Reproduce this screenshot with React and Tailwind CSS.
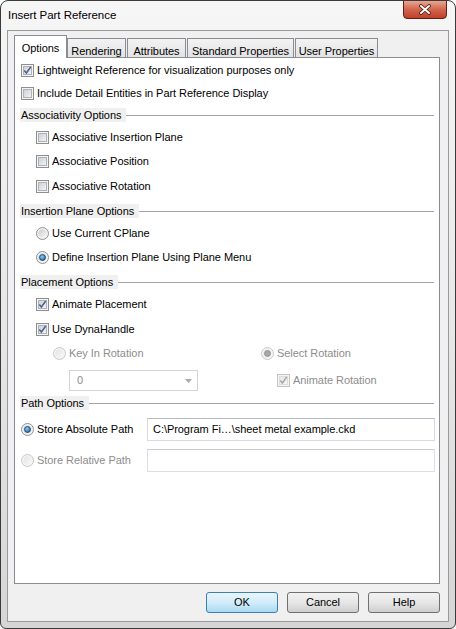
import React from 'react'

const Check = ({ checked, disabled }) => {
  const border = disabled ? '#c4c4c4' : '#8e8f8f'
  const tick = disabled ? '#a8a8a8' : '#4c5f8e'
  return (
    <svg width="13" height="13" viewBox="0 0 13 13" className="shrink-0">
      <defs>
        <linearGradient id={disabled ? 'cbd' : 'cbe'} x1="0" y1="0" x2="1" y2="1">
          <stop offset="0" stopColor={disabled ? '#e6e6e6' : '#cbcfd5'} />
          <stop offset="1" stopColor={disabled ? '#f7f7f7' : '#f4f5f6'} />
        </linearGradient>
      </defs>
      <rect x="0.5" y="0.5" width="12" height="12" fill="#f4f4f4" stroke={border} />
      <rect x="2.5" y="2.5" width="8" height="8" fill={`url(#${disabled ? 'cbd' : 'cbe'})`} stroke={disabled ? '#dcdcdc' : '#aeb3b9'} />
      {checked && (
        <path d="M3.3 6.5 L5.4 9 L9.7 3" fill="none" stroke={tick} strokeWidth="1.5" />
      )}
    </svg>
  )
}

const Radio = ({ checked, disabled }) => {
  const id = disabled ? 'rdd' : 'rde'
  return (
    <svg width="13" height="13" viewBox="0 0 13 13" className="shrink-0">
      <defs>
        <linearGradient id={id} x1="0" y1="0" x2="1" y2="1">
          <stop offset="0" stopColor={disabled ? '#e4e4e4' : '#c9ccd1'} />
          <stop offset="1" stopColor={disabled ? '#f8f8f8' : '#f5f5f5'} />
        </linearGradient>
        <radialGradient id="rdot" cx="0.4" cy="0.35" r="0.7">
          <stop offset="0" stopColor="#8fd0f5" />
          <stop offset="1" stopColor="#1a5c9b" />
        </radialGradient>
      </defs>
      <circle cx="6.5" cy="6.5" r="6" fill="#f4f4f4" stroke={disabled ? '#c8c8c8' : '#8e8f8f'} />
      <circle cx="6.5" cy="6.5" r="4.2" fill={`url(#${id})`} />
      {checked && !disabled && <circle cx="6.5" cy="6.5" r="3" fill="url(#rdot)" stroke="#1b3f6e" strokeWidth="0.8" />}
      {checked && disabled && <circle cx="6.5" cy="6.5" r="3" fill="#a7a7a7" stroke="#8a8a8a" strokeWidth="0.8" />}
    </svg>
  )
}

const Header = ({ label, mt }) => (
  <div className={`flex items-center h-[16px] pl-[5px] pr-[5px] ${mt}`}>
    <span className="bg-[#f0f0f0] h-[14px] leading-[14px] pl-[1px] pr-[5px] whitespace-nowrap">{label}</span>
    <div className="flex-1 h-px bg-[#a5a5a5]" />
  </div>
)

const Tab = ({ label, active, w }) =>
  active ? (
    <div className={`${w} h-[23px] -mb-px relative z-10 bg-white border border-b-0 border-[#898c95] flex justify-center pt-[4px]`}>
      {label}
    </div>
  ) : (
    <div className={`${w} h-[19px] border border-b-0 border-[#898c95] bg-gradient-to-b from-[#f3f3f3] to-[#e3e3e3] flex justify-center pt-[4px]`}>
      {label}
    </div>
  )

const Button = ({ label, primary }) => (
  <div
    className={`w-[72px] h-[21px] rounded-[3px] border flex items-center justify-center ${
      primary
        ? 'border-[#3c7fb1] bg-gradient-to-b from-[#e9f5fc] via-[#d3ecfa] to-[#a9d9f2]'
        : 'border-[#707070] bg-gradient-to-b from-[#f2f2f2] via-[#e6e6e6] to-[#cfcfcf]'
    }`}
  >
    {label}
  </div>
)

export default function App() {
  return (
    <div className="w-[456px] h-[629px] bg-white font-['Liberation_Sans',Arial,sans-serif] text-[11px] tracking-[-0.05px] text-black">
      <div className="w-[456px] h-[629px] flex flex-col rounded-t-[8px] rounded-b-[6px] border border-[#3a3a3a] bg-gradient-to-b from-[#f6f6f6] via-[#e8e8e8] to-[#d6d6d6] relative overflow-hidden">
        {/* title bar */}
        <div className="h-[29px] flex items-center pl-[7px] text-[11.5px] text-black shrink-0">
          Insert Part Reference
        </div>
        <div className="absolute top-[-1px] right-[8px] w-[44px] h-[19px] rounded-b-[4px] border border-[#5b2218] bg-gradient-to-b from-[#e9a591] via-[#d0664e] to-[#c13e28] flex items-center justify-center">
          <svg width="14" height="11" viewBox="0 0 14 11">
            <path d="M3 2 L11 9 M11 2 L3 9" stroke="#4a1a12" strokeWidth="3.6" strokeLinecap="round" />
            <path d="M3 2 L11 9 M11 2 L3 9" stroke="#ffffff" strokeWidth="2" strokeLinecap="round" />
          </svg>
        </div>

        {/* client area */}
        <div className="flex-1 mx-[6px] mb-[6px] border border-[#9a9a9a] bg-[#f0f0f0] flex flex-col pl-[6px]">
          <div className="flex items-end pt-[4px] h-[26px]">
            <Tab label="Options" active w="w-[53px]" />
            <Tab label="Rendering" w="w-[59px]" />
            <div className="w-px" />
            <Tab label="Attributes" w="w-[59px]" />
            <div className="w-px" />
            <Tab label="Standard Properties" w="w-[107px]" />
            <div className="w-px" />
            <Tab label="User Properties" w="w-[83px]" />
          </div>

          <div className="w-[426px] h-[527px] border border-[#898c95] bg-white flex flex-col">
            <div className="flex items-center gap-[3px] h-[16px] pl-[6px] mt-[4px]">
              <Check checked />
              <span>Lightweight Reference for visualization purposes only</span>
            </div>
            <div className="flex items-center gap-[3px] h-[16px] pl-[6px] mt-[7px]">
              <Check />
              <span>Include Detail Entities in Part Reference Display</span>
            </div>

            <Header label="Associativity Options" mt="mt-[6px]" />
            <div className="flex items-center gap-[3px] h-[16px] pl-[21px] mt-[6px]">
              <Check />
              <span>Associative Insertion Plane</span>
            </div>
            <div className="flex items-center gap-[3px] h-[16px] pl-[21px] mt-[8px]">
              <Check />
              <span>Associative Position</span>
            </div>
            <div className="flex items-center gap-[3px] h-[16px] pl-[21px] mt-[9px]">
              <Check />
              <span>Associative Rotation</span>
            </div>

            <Header label="Insertion Plane Options" mt="mt-[9px]" />
            <div className="flex items-center gap-[3px] h-[16px] pl-[21px] mt-[6px]">
              <Radio />
              <span>Use Current CPlane</span>
            </div>
            <div className="flex items-center gap-[3px] h-[16px] pl-[21px] mt-[8px]">
              <Radio checked />
              <span>Define Insertion Plane Using Plane Menu</span>
            </div>

            <Header label="Placement Options" mt="mt-[9px]" />
            <div className="flex items-center gap-[3px] h-[16px] pl-[21px] mt-[6px]">
              <Check checked />
              <span>Animate Placement</span>
            </div>
            <div className="flex items-center gap-[3px] h-[16px] pl-[21px] mt-[9px]">
              <Check checked />
              <span>Use DynaHandle</span>
            </div>

            <div className="flex items-center h-[16px] pl-[38px] mt-[8px] text-[#8d8d8d]">
              <div className="w-[208px] flex items-center gap-[3px]">
                <Radio disabled />
                <span>Key In Rotation</span>
              </div>
              <div className="flex items-center gap-[3px]">
                <Radio checked disabled />
                <span>Select Rotation</span>
              </div>
            </div>
            <div className="flex items-center h-[21px] pl-[54px] mt-[9px] text-[#8d8d8d]">
              <div className="w-[129px] h-[21px] border border-[#d5d5d5] flex items-center justify-between pl-[7px] pr-[5px]">
                <span>0</span>
                <svg width="7" height="4" viewBox="0 0 7 4">
                  <path d="M0 0 L7 0 L3.5 4 Z" fill="#a9a9a9" />
                </svg>
              </div>
              <div className="flex items-center gap-[3px] ml-[79px]">
                <Check checked disabled />
                <span>Animate Rotation</span>
              </div>
            </div>

            <Header label="Path Options" mt="mt-[4px]" />
            <div className="flex items-center h-[23px] pl-[6px] mt-[7px]">
              <div className="w-[126px] flex items-center gap-[3px]">
                <Radio checked />
                <span>Store Absolute Path</span>
              </div>
              <div className="w-[288px] h-[23px] border border-[#d6dbe3] border-t-[#b5b9c1] flex items-center pl-[5px]">
                C:\Program Fi…\sheet metal example.ckd
              </div>
            </div>
            <div className="flex items-center h-[23px] pl-[6px] mt-[8px]">
              <div className="w-[126px] flex items-center gap-[3px] text-[#8d8d8d]">
                <Radio disabled />
                <span>Store Relative Path</span>
              </div>
              <div className="w-[288px] h-[23px] border border-[#dcdfe5] border-t-[#c9ccd2]" />
            </div>
          </div>

          <div className="flex justify-end gap-[9px] mt-[8px] w-[426px]">
            <Button label="OK" primary />
            <Button label="Cancel" />
            <Button label="Help" />
          </div>
        </div>
      </div>
    </div>
  )
}
